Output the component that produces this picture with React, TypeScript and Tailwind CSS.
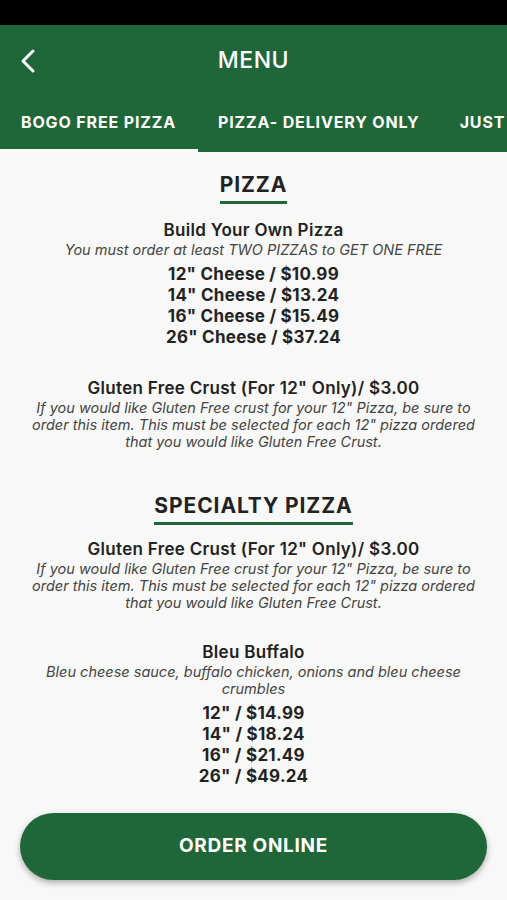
import React from "react";

const font = { fontFamily: "Inter, 'Noto Sans', sans-serif" };

function Heading({ children }: { children: React.ReactNode }) {
  return (
    <div className="flex justify-center">
      <div className="flex flex-col items-center">
        <div className="text-[21px] font-bold tracking-[0.9px] text-[#222] leading-[26px]">{children}</div>
        <div className="h-[3px] w-full bg-[#1f6638] mt-[3px]" />
      </div>
    </div>
  );
}

function Item({ title, desc, prices }: { title: string; desc?: string; prices?: string[] }) {
  return (
    <div className="flex flex-col items-center text-center px-[30px]">
      <div className="text-[17px] font-semibold tracking-[0.3px] text-[#222] leading-[21px]">{title}</div>
      {desc && <div className="text-[14.5px] italic text-[#444] leading-[17px]">{desc}</div>}
      {prices && (
        <div className="mt-[6px] flex flex-col items-center">
          {prices.map((p) => (
            <div key={p} className="text-[17px] font-bold tracking-[0.25px] text-[#222] leading-[21px]">{p}</div>
          ))}
        </div>
      )}
    </div>
  );
}

export default function App() {
  const gf =
    "If you would like Gluten Free crust for your 12\" Pizza, be sure to order this item. This must be selected for each 12\" pizza ordered that you would like Gluten Free Crust.";
  return (
    <div style={font} className="w-[507px] h-[900px] flex flex-col bg-[#f8f8f8] overflow-hidden">
      <div className="h-[25px] bg-black shrink-0" />
      <div className="bg-[#1f6638] shrink-0">
        <div className="h-[70px] flex items-center relative">
          <svg className="absolute left-[19px] top-[23px]" width="18" height="26" viewBox="0 0 18 26">
            <path d="M14 3 L4 13 L14 23" stroke="white" strokeWidth="3" fill="none" strokeLinecap="round" strokeLinejoin="round" />
          </svg>
          <div className="flex-1 text-center text-white text-[23px] font-medium tracking-[0.5px]">MENU</div>
        </div>
        <div className="flex h-[57px] whitespace-nowrap overflow-hidden">
          <div className="flex flex-col shrink-0">
            <div className="flex-1 flex items-center pl-[21px] pr-[22px] text-white text-[16px] font-bold tracking-[0.85px]">BOGO FREE PIZZA</div>
            <div className="h-[3px] bg-white" />
          </div>
          <div className="shrink-0 flex items-center px-[20px] text-white text-[16px] font-bold tracking-[0.85px] pb-[3px]">PIZZA- DELIVERY ONLY</div>
          <div className="shrink-0 flex items-center px-[20px] text-white text-[16px] font-bold tracking-[0.85px] pb-[3px]">JUST FOR YOU</div>
        </div>
      </div>
      <div className="flex-1 flex flex-col pt-[20px] overflow-hidden">
        <Heading>PIZZA</Heading>
        <div className="mt-[16px]">
          <Item
            title="Build Your Own Pizza"
            desc="You must order at least TWO PIZZAS to GET ONE FREE"
            prices={['12" Cheese / $10.99', '14" Cheese / $13.24', '16" Cheese / $15.49', '26" Cheese / $37.24']}
          />
        </div>
        <div className="mt-[30px]">
          <Item title={'Gluten Free Crust (For 12" Only)/ $3.00'} desc={gf} />
        </div>
        <div className="mt-[43px]">
          <Heading>SPECIALTY PIZZA</Heading>
        </div>
        <div className="mt-[14px]">
          <Item title={'Gluten Free Crust (For 12" Only)/ $3.00'} desc={gf} />
        </div>
        <div className="mt-[31px]">
          <Item
            title="Bleu Buffalo"
            desc="Bleu cheese sauce, buffalo chicken, onions and bleu cheese crumbles"
            prices={['12" / $14.99', '14" / $18.24', '16" / $21.49', '26" / $49.24']}
          />
        </div>
      </div>
      <div className="shrink-0 px-[20px] pb-[20px]">
        <div className="h-[67px] rounded-full bg-[#1f6638] shadow-[0_3px_6px_rgba(0,0,0,0.3)] flex items-center justify-center text-white text-[19px] font-bold tracking-[0.7px]">
          ORDER ONLINE
        </div>
      </div>
    </div>
  );
}
